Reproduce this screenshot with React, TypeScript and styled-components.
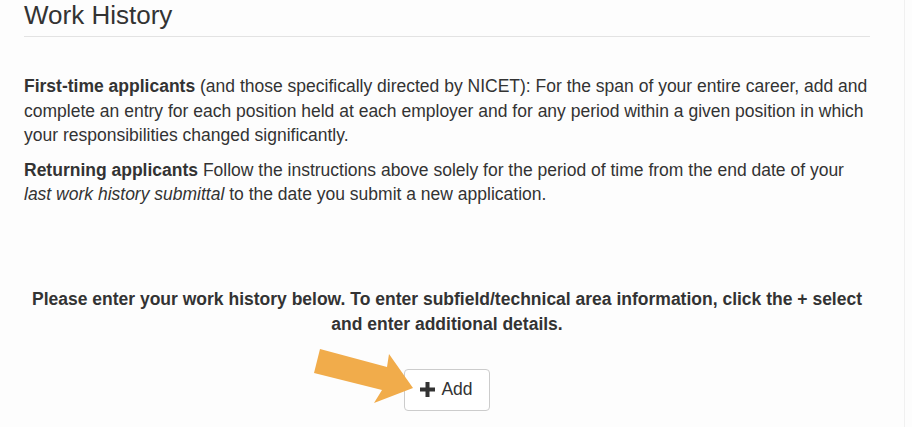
import styled, { createGlobalStyle } from 'styled-components';

const GlobalStyle = createGlobalStyle`
	html, body {
		margin: 0;
		padding: 0;
		background-color: #fdfdfd;
	}
	body {
		font-family: 'Liberation Sans', Arial, sans-serif;
		color: #333;
	}
`;

const App = () => {
	return (
		<>
			<GlobalStyle />
			<Page>
				<Container>
					<Title>Work History</Title>
					<Intro>
						<Text>
							<strong>First-time applicants</strong> (and those specifically directed by NICET): For the span of
							your entire career, add and complete an entry for each position held at each employer and for any
							period within a given position in which your responsibilities changed significantly.
						</Text>
						<Text>
							<strong>Returning applicants</strong> Follow the instructions above solely for the period of time from
							the end date of your <em>last work history submittal</em> to the date you submit a new application.
						</Text>
					</Intro>
					<Notice>
						Please enter your work history below. To enter subfield/technical area information, click the + select
						and enter additional details.
					</Notice>
					<Actions>
						<ButtonWrap>
							<Arrow width='110' height='66' viewBox='0 0 110 66'>
								<polygon points='10,4 77,22 79,9 103,43 64,58 72,45 4,28' fill='#f1ac4b' />
							</Arrow>
							<AddButton type='button'>
								<svg width='15' height='15' viewBox='0 0 15 15'>
									<rect x='5.5' y='0' width='4' height='15' fill='#333' />
									<rect x='0' y='5.5' width='15' height='4' fill='#333' />
								</svg>
								Add
							</AddButton>
						</ButtonWrap>
					</Actions>
				</Container>
			</Page>
		</>
	);
};

export default App;

const Page = styled.div`
	width: 905px;
	min-height: 427px;
	border-right: 1px solid #f0f0f0;
	box-sizing: border-box;
	padding: 0 35px 0 24px;
`;

const Container = styled.div`
	width: 846px;
`;

const Title = styled.h3`
	margin: 0;
	padding: 0 0 6px;
	font-size: 26px;
	font-weight: 400;
	line-height: 30px;
	border-bottom: 1px solid #e3e3e3;
`;

const Intro = styled.div`
	margin-top: 37px;
`;

const Text = styled.p`
	margin: 0 0 10px;
	font-size: 17.5px;
	line-height: 24.5px;
`;

const Notice = styled.p`
	margin: 80px 0 0;
	font-size: 17.5px;
	font-weight: 700;
	line-height: 25px;
	text-align: center;
`;

const Actions = styled.div`
	display: flex;
	justify-content: center;
	margin-top: 32px;
`;

const ButtonWrap = styled.div`
	position: relative;
`;

const Arrow = styled.svg`
	position: absolute;
	left: -94px;
	top: -24px;
	z-index: 2;
`;

const AddButton = styled.button`
	display: flex;
	align-items: center;
	gap: 6px;
	height: 42px;
	padding: 0 16px 0 15px;
	font-family: 'Liberation Sans', Arial, sans-serif;
	font-size: 17.5px;
	color: #333;
	background-color: #fff;
	border: 1px solid #ccc;
	border-radius: 4px;
	cursor: pointer;
`;
